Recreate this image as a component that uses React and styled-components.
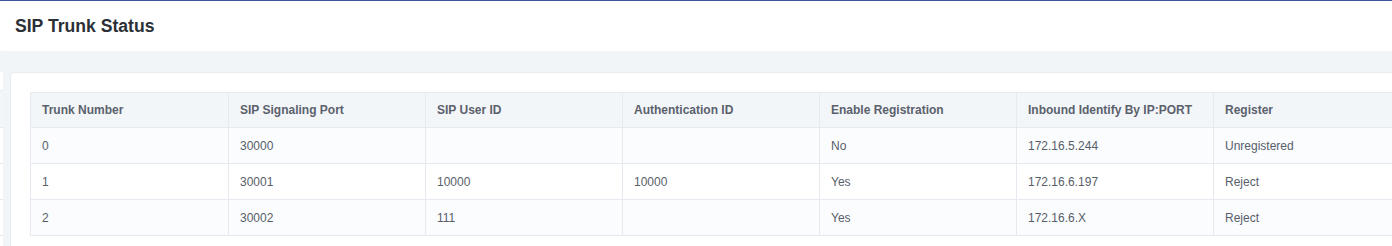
import React from "react";
import styled, { createGlobalStyle } from "styled-components";

const GlobalStyle = createGlobalStyle`
  html, body {
    margin: 0;
    padding: 0;
    overflow: hidden;
    background: #f2f5f8;
    font-family: "Liberation Sans", Arial, sans-serif;
  }
`;

const Page = styled.div`
  width: 1392px;
  height: 246px;
  overflow: hidden;
  background: #f2f5f8;
`;

const TitleBar = styled.header`
  height: 49px;
  box-sizing: content-box;
  border-top: 1px solid #3a5a9e;
  background: #ffffff;
  display: flex;
  align-items: center;
  padding: 1px 0 0 15px;
  margin-bottom: -1px;
  border-bottom-left-radius: 3px;
`;

const Title = styled.h1`
  margin: 0;
  font-size: 17.6px;
  font-weight: 700;
  color: #2b2f36;
`;

const Body = styled.div`
  display: flex;
  align-items: flex-start;
  gap: 7px;
  padding-top: 22px;
`;

const SideStrip = styled.div`
  flex: none;
  width: 3px;
  height: 180px;
  background: #ffffff;
  padding-top: 18px;
  box-sizing: border-box;
`;

const StripRow = styled.div`
  height: ${(p) => (p.$first ? 37 : 36)}px;
  box-sizing: border-box;
  border-top: 1px solid #e6eaf0;
  background: ${(p) => (p.$head ? "#f3f6f9" : "#ffffff")};
`;

const Panel = styled.section`
  flex: none;
  width: 1420px;
  min-height: 200px;
  background: #ffffff;
  border: 1px solid #e8ecf1;
  border-radius: 4px;
  padding: 19px;
  box-sizing: border-box;
`;

const Table = styled.table`
  border-collapse: separate;
  border-spacing: 0;
  table-layout: fixed;
  border-top: 1px solid #e6eaf0;
  border-left: 1px solid #e6eaf0;
  font-size: 12px;
`;

const HeadCell = styled.th`
  height: 35px;
  padding: 0 12px 0 11px;
  box-sizing: border-box;
  text-align: left;
  font-weight: 700;
  color: #5b616c;
  background: #f3f6f9;
  border-right: 1px solid #e6eaf0;
  border-bottom: 1px solid #e6eaf0;
  white-space: nowrap;
`;

const Row = styled.tr`
  background: ${(p) => (p.$striped ? "#fafcfe" : "#ffffff")};
`;

const Cell = styled.td`
  height: 35px;
  padding: 0 12px 0 11px;
  color: #585e69;
  border-right: 1px solid #e6eaf0;
  border-bottom: 1px solid #e6eaf0;
  white-space: nowrap;
`;

const columns = [
  { label: "Trunk Number", width: 198 },
  { label: "SIP Signaling Port", width: 197 },
  { label: "SIP User ID", width: 197 },
  { label: "Authentication ID", width: 197 },
  { label: "Enable Registration", width: 197 },
  { label: "Inbound Identify By IP:PORT", width: 197 },
  { label: "Register", width: 197 },
];

const trunks = [
  ["0", "30000", "", "", "No", "172.16.5.244", "Unregistered"],
  ["1", "30001", "10000", "10000", "Yes", "172.16.6.197", "Reject"],
  ["2", "30002", "111", "", "Yes", "172.16.6.X", "Reject"],
];

const tableWidth = columns.reduce((sum, c) => sum + c.width, 0);

export default function App() {
  return (
    <Page>
      <GlobalStyle />
      <TitleBar>
        <Title>SIP Trunk Status</Title>
      </TitleBar>
      <Body>
        <SideStrip>
          <StripRow $head $first />
          <StripRow />
          <StripRow />
          <StripRow />
          <StripRow />
        </SideStrip>
        <Panel>
          <Table style={{ width: tableWidth }}>
            <colgroup>
              {columns.map((c) => (
                <col key={c.label} style={{ width: c.width }} />
              ))}
            </colgroup>
            <thead>
              <tr>
                {columns.map((c) => (
                  <HeadCell key={c.label}>{c.label}</HeadCell>
                ))}
              </tr>
            </thead>
            <tbody>
              {trunks.map((row, i) => (
                <Row key={i} $striped={i % 2 === 0}>
                  {row.map((v, j) => (
                    <Cell key={j}>{v}</Cell>
                  ))}
                </Row>
              ))}
            </tbody>
          </Table>
        </Panel>
      </Body>
    </Page>
  );
}
